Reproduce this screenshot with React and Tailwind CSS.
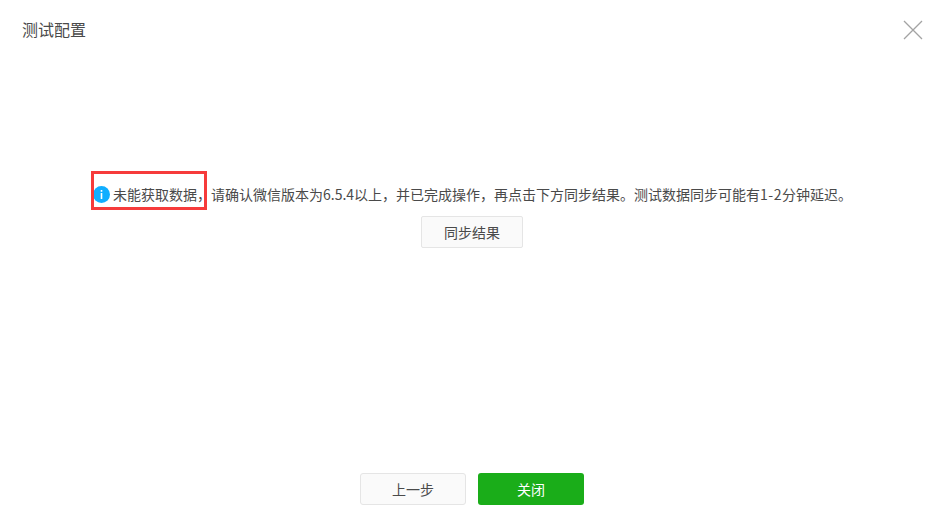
export default function App() {
  const font = { fontFamily: '"Noto Sans CJK SC", "Liberation Sans", sans-serif' };
  return (
    <div style={font} className="relative w-[928px] h-[529px] bg-white flex flex-col overflow-hidden text-[#4a4a4a]">
      <div className="h-[60px] pl-[22px] pr-[5px] flex items-center justify-between shrink-0">
        <span className="text-[16px] leading-[24px] mt-[-2px]">测试配置</span>
        <svg width="20" height="20" viewBox="0 0 20 20">
          <path d="M1 1L19 19M19 1L1 19" stroke="#a3a3a3" strokeWidth="1.3" fill="none" />
        </svg>
      </div>
      <div className="pt-[116px] pl-[16px] flex-1 flex flex-col items-center">
        <div className="relative flex items-center h-[40px] mr-[-1px] text-[14px] whitespace-nowrap">
          <div className="absolute left-[-2px] top-[-5px] w-[116px] h-[39px] border-[3px] border-[#f63b3b]" />
          <svg width="17" height="17" viewBox="0 0 17 17" className="mr-[3px] mt-[-3px] shrink-0">
            <circle cx="8.5" cy="8.5" r="8.5" fill="#10aeff" />
            <rect x="7.7" y="4" width="1.6" height="1.8" fill="#fff" />
            <rect x="7.7" y="7" width="1.6" height="6" fill="#fff" />
          </svg>
          <span className="mt-[-4px]">未能获取数据，请确认微信版本为6.5.4以上，并已完成操作，再点击下方同步结果。测试数据同步可能有<span className="tracking-[0.5px]">1-2</span>分钟延迟。</span>
        </div>
        <button className="w-[102px] h-[32px] bg-[#fafafa] border border-[#e5e5e5] rounded-[2px] text-[14px] text-[#4a4a4a]">同步结果</button>
      </div>
      <div className="flex justify-center gap-[12px] pb-[24px] shrink-0 pl-[16px]">
        <button className="w-[106px] h-[32px] bg-[#fafafa] border border-[#e5e5e5] rounded-[3px] text-[14px] text-[#4a4a4a]">上一步</button>
        <button className="w-[106px] h-[32px] bg-[#1aad19] rounded-[3px] text-[14px] text-white">关闭</button>
      </div>
    </div>
  );
}
